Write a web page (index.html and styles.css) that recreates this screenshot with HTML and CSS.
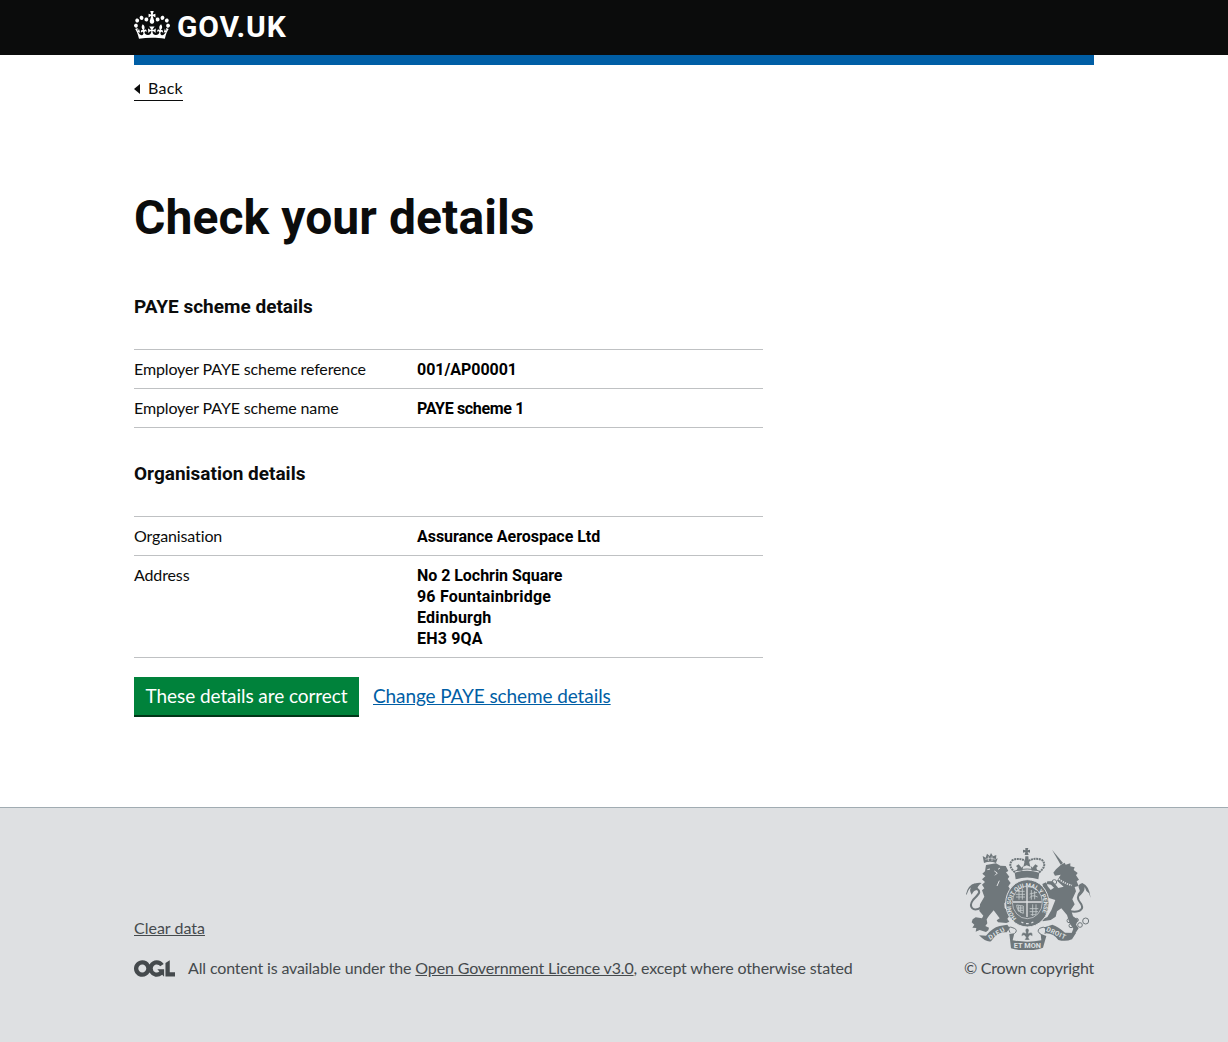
FILE: index.html
```html
<!DOCTYPE html>
<html lang="en">
<head>
<meta charset="utf-8">
<title>Check your details</title>
<link rel="stylesheet" href="styles.css">
</head>
<body>
<header class="header">
  <div class="container header-inner">
    <a class="logo" href="#">
      <svg class="logo-crown" viewBox="0 0 132 97" width="36" height="28" preserveAspectRatio="none" aria-hidden="true"><path fill="currentColor" fill-rule="evenodd" d="M25 30.2c3.5 1.5 7.7-.2 9.1-3.7 1.5-3.6-.2-7.8-3.9-9.2-3.6-1.4-7.6.3-9.1 3.9-1.4 3.5.3 7.5 3.9 9zM9 39.5c3.6 1.5 7.8-.2 9.2-3.7 1.5-3.6-.2-7.8-3.9-9.1-3.6-1.5-7.6.2-9.1 3.8-1.4 3.5.3 7.5 3.8 9zM4.4 57.2c3.5 1.5 7.7-.2 9.1-3.8 1.5-3.6-.2-7.7-3.9-9.1-3.5-1.5-7.6.3-9.1 3.8-1.4 3.5.3 7.6 3.9 9.1zm38.3-21.4c3.5 1.5 7.7-.2 9.1-3.8 1.5-3.6-.2-7.7-3.9-9.1-3.6-1.5-7.6.3-9.1 3.8-1.3 3.6.4 7.7 3.9 9.1zm64.4-5.6c-3.6 1.5-7.8-.2-9.1-3.7-1.5-3.6.2-7.8 3.8-9.2 3.6-1.4 7.7.3 9.2 3.9 1.3 3.5-.4 7.5-3.9 9zm15.9 9.3c-3.6 1.5-7.7-.2-9.1-3.7-1.5-3.6.2-7.8 3.7-9.1 3.6-1.5 7.7.2 9.2 3.8 1.5 3.5-.3 7.5-3.8 9zm4.7 17.7c-3.6 1.5-7.8-.2-9.2-3.8-1.5-3.6.2-7.7 3.9-9.1 3.6-1.5 7.7.3 9.2 3.8 1.3 3.5-.4 7.6-3.9 9.1zM89.3 35.8c-3.6 1.5-7.8-.2-9.2-3.8-1.4-3.6.2-7.7 3.9-9.1 3.6-1.5 7.7.3 9.2 3.8 1.4 3.6-.3 7.7-3.9 9.1zM69.7 17.7l8.9 4.7V9.3l-8.9 2.8c-.2-.3-.5-.6-.9-.9L72.4 0H59.6l3.5 11.2c-.3.3-.6.5-.9.9l-8.8-2.8v13.1l8.8-4.7c.3.3.6.7.9.9l-5 15.4v.1c-.2.8-.4 1.6-.4 2.4 0 4.1 3.1 7.5 7 8.1h.2c.3 0 .7.1 1 .1.4 0 .7 0 1-.1h.2c4-.6 7.1-4.1 7.1-8.1 0-.8-.1-1.7-.4-2.4V34l-5.1-15.4c.4-.2.7-.6 1-.9zM66 92.8c16.9 0 32.8 1.1 47.1 3.2 4-16.9 8.9-26.7 14-33.5l-9.6-3.4c1 4.9 1.1 7.2 0 10.2-1.5-1.4-3-4.3-4.2-8.7L108.6 76c2.8-2 5-3.2 7.5-3.3-4.4 9.4-10 11.9-13.6 11.2-4.3-.8-6.3-4.6-5.6-7.9 1-4.7 5.7-5.9 8-.5 4.3-8.7-3-11.4-7.6-8.8 7.1-7.2 7.9-13.5 2.1-21.1-8 6.1-8.1 12.3-4.5 20.8-4.7-5.4-12.1-2.5-9.5 6.2 3.4-5.2 7.9-2 7.2 3.1-.6 4.3-6.4 7.8-13.5 7.2-10.3-.9-10.9-8-11.2-13.8 2.5-.5 7.1 1.8 11 7.3L80.2 60c-4.1 4.4-8 5.3-12.3 5.4 1.4-4.4 8-11.6 8-11.6H55.5s6.4 7.2 7.9 11.6c-4.2-.1-8-1-12.3-5.4l1.4 16.4c3.9-5.5 8.5-7.7 10.9-7.3-.3 5.8-.9 12.8-11.1 13.8-7.2.6-12.9-2.9-13.5-7.2-.7-5 3.8-8.3 7.1-3.1 2.7-8.7-4.6-11.6-9.4-6.2 3.7-8.5 3.6-14.7-4.6-20.8-5.8 7.6-5 13.9 2.2 21.1-4.7-2.6-11.9.1-7.7 8.8 2.3-5.5 7.1-4.2 8.1.5.7 3.3-1.3 7.1-5.7 7.9-3.5.7-9-1.8-13.5-11.2 2.5.1 4.7 1.3 7.5 3.3l-4.7-15.4c-1.2 4.4-2.7 7.2-4.3 8.7-1.1-3-.9-5.3 0-10.2l-9.5 3.4c5 6.9 9.9 16.7 14 33.5 14.8-2.1 30.8-3.2 47.7-3.2z"/></svg>
      <span class="logo-text">GOV.UK</span>
    </a>
  </div>
</header>
<div class="container">
  <div class="header-bar"></div>
  <a class="back" href="#"><span class="back-arrow"></span>Back</a>
  <main class="main">
    <h1>Check your details</h1>
    <h2>PAYE scheme details</h2>
    <dl class="summary">
      <div class="row"><dt>Employer PAYE scheme reference</dt><dd>001/AP00001</dd></div>
      <div class="row"><dt>Employer PAYE scheme name</dt><dd class="tight">PAYE scheme 1</dd></div>
    </dl>
    <h2>Organisation details</h2>
    <dl class="summary">
      <div class="row"><dt>Organisation</dt><dd>Assurance Aerospace Ltd</dd></div>
      <div class="row"><dt>Address</dt><dd>No 2 Lochrin Square<br><span class="loose">96 Fountainbridge<br>Edinburgh<br>EH3 9QA</span></dd></div>
    </dl>
    <div class="actions">
      <button class="button" type="button">These details are correct</button>
      <a class="link" href="#">Change PAYE scheme details</a>
    </div>
  </main>
</div>
<footer class="footer">
  <div class="container footer-inner">
    <div class="meta">
      <a class="clear" href="#">Clear data</a>
      <div class="licence">
        <svg class="ogl" viewBox="0 0 483.2 195.7" width="41" height="17" aria-hidden="true"><path fill="currentColor" d="M421.5 142.8V.1l-50.7 32.3v161.1h112.4v-50.7zm-122.3-9.6A47.12 47.12 0 0 1 221 97.8c0-26 21.1-47.1 47.1-47.1 16.7 0 31.4 8.7 39.7 21.8l42.7-27.2A97.63 97.63 0 0 0 268.1 0c-36.5 0-68.3 20.1-85.1 49.7A98 98 0 0 0 97.8 0C43.9 0 0 43.9 0 97.8s43.9 97.8 97.8 97.8c36.5 0 68.3-20.1 85.1-49.7a97.76 97.76 0 0 0 149.6 25.4l19.4 22.2h3v-87.8h-80l24.3 27.5zM97.8 145c-26 0-47.1-21.1-47.1-47.1s21.1-47.1 47.1-47.1 47.1 21.1 47.1 47.1S123.8 145 97.8 145"/></svg>
        <span>All content is available under the <a href="#">Open Government Licence v3.0</a>, except where otherwise stated</span>
      </div>
    </div>
    <a class="copyright" href="#">
      <svg class="crest" viewBox="36 24 375 306" width="125" height="102" aria-hidden="true">
        <defs>
          <path id="motto" d="M188 235A49 53 0 1 1 252 235"/>
        </defs>
        <g fill="currentColor">
          <!-- lion -->
          <path d="M90 69L86 48L95 53L99 41L107 48L111 39L117 49L127 45L126 57L131 55L126 69Q108 62 90 69Z"/>
          <path d="M96 75L126 70L139 77L155 78L163 93L156 97L166 110L161 117L170 129L163 139L174 158L159 163L158 183L151 190L152 204L171 222L160 236L166 245L157 249L132 247L128 241L137 235L119 211L105 227L98 238L100 250L94 258L105 263L103 271L96 276L77 270L65 275L67 264L55 263L61 254L53 247L56 238L65 232L84 235L88 227L76 213L78 193L91 170L84 151L91 145L84 134L93 126L84 118L94 109L85 101L93 94Z"/>
          <path d="M53 164Q43 149 55 135Q66 127 83 129Q70 138 68 151Q60 150 53 164Z"/>
          <path d="M36 163Q42 135 63 130L61 136Q44 143 38 164Z"/>
          <!-- royal crown -->
          <path d="M214 24h9l-2 7 7-2v9l-7-2 3 9h-12l2-9-7 2v-9l7 2z"/>
          <path d="M182 98Q220 87 256 98L253 118Q220 107 185 118Z"/>
          <path d="M214 49h9l1 11 5 20-11-4-10 4 5-20zM194 73l9 10 5-6-3 15h-17l3-9-5-5zM244 73l-9 10-5-6 3 15h17l-3-9 5-5z"/>
          <!-- unicorn -->
          <path d="M294 29L327 69L320 74Z"/>
          <path d="M321 74L332 68L335 74L349 70L349 79L362 82L359 90L371 99L366 106L375 119L368 124L374 138L362 141L366 154L355 178L362 193L351 209L357 229L372 239L366 254L374 265L363 281L351 284L358 266L347 250L339 225L322 205L309 214L305 230L290 240L266 244L265 238L280 231L292 211L304 180L285 174L271 178L276 152L268 142L265 132L276 127L281 139L290 150L300 143L291 134L278 132L280 124L296 124L313 144L329 140L309 122L320 104L303 107L298 98L306 88Z"/>
          <path d="M371 172Q382 160 376 148Q368 133 385 129Q406 137 410 174L405 160Q395 153 392 141Q393 158 371 172Z"/>
          <!-- ribbons -->
          <path d="M75 286L96 287Q114 264 137 258L160 254L167 264L158 277Q130 274 111 304Q97 308 75 286Z"/>
          <path d="M272 262L295 254Q313 260 333 278L366 279L354 298Q335 306 313 300Q300 281 276 280Z"/>
          <path d="M166 282L181 280L176 301Q220 309 262 301L260 281L277 288L267 323Q221 339 171 325Z"/>
        </g>
        <g fill="none" stroke="currentColor">
          <path stroke-width="6" d="M82 202C56 219 43 199 57 180C72 163 84 157 68 145M347 214C385 220 391 202 378 187Q365 173 379 156"/>
          <path stroke-width="6" stroke-dasharray="6 2" d="M183 97Q159 76 176 60Q198 52 216 64M255 97Q281 77 264 60Q241 51 222 64"/>
          <path stroke-width="3" d="M184 92Q220 82 254 92M168 278Q155 253 181 265Q193 271 181 281M273 282Q282 253 257 265Q246 274 261 283"/>
          <g stroke-width="3"><circle cx="301" cy="126" r="7"/><circle cx="345" cy="242" r="6"/><circle cx="351" cy="257" r="6"/><circle cx="368" cy="240" r="5"/><circle cx="378" cy="255" r="7"/><circle cx="395" cy="243" r="9"/></g>
        </g>
        <!-- garter and shield -->
        <ellipse cx="220" cy="190" rx="65" ry="71" fill="currentColor" stroke="#dee0e2" stroke-width="3"/>
        <ellipse cx="220" cy="187" rx="45" ry="49" fill="currentColor" stroke="#dee0e2" stroke-width="2"/>
        <path d="M219 141V231M177 186H263" stroke="#dee0e2" stroke-width="4"/>
        <path d="M185 163h28M186 171h27M190 154h22M227 173q8-10 24-2M227 162l22-5M227 206h26M227 215h25M230 224h17M188 195l20 3v22q-20-5-20-25M194 197v18M200 198v20M190 204h17M191 211h17M232 150v29M242 153v25M236 193v35M246 193v30M195 148v31M205 145v34" fill="none" stroke="#c7ccce" stroke-width="2.5"/>
        <path d="M202 246l6 3M216 251h8M232 249l6-3" stroke="#dee0e2" stroke-width="4"/>
        <path fill="currentColor" stroke="#dee0e2" stroke-width="1" d="M214 270Q219 259 225 270L223 280Q238 272 235 289L228 285 223 292 227 300H212L216 292 210 285 203 289Q202 273 216 280Z"/>
        <g class="crest-text" fill="#dee0e2">
          <text font-size="18"><textPath href="#motto" textLength="228">HONI SOIT QUI MAL Y PENSE</textPath></text>
          <text font-size="22" x="179" y="325" textLength="82">ET MON</text>
          <text font-size="20" transform="translate(108 300) rotate(-30)" textLength="53">DIEU</text>
          <text font-size="20" transform="translate(275 272) rotate(25)" textLength="62">DROIT</text>
        </g>
        <g fill="none" stroke="#dee0e2">
          <path stroke-width="2" d="M94 58Q109 51 125 58M103 49v14M114 49v14"/>
          <path stroke-width="5" d="M310 112Q325 129 354 136" stroke-dasharray="4 3"/>
          <path stroke-width="3" d="M121 93l9 6-7 7M138 84l-6 4M108 87l-8 2M136 122l-7 16"/>
        </g>
      </svg>
      <span>© Crown copyright</span>
    </a>
  </div>
</footer>
</body>
</html>
```

FILE: styles.css
```css
* { box-sizing: border-box; }
body {
  margin: 0;
  min-height: 1042px;
  display: flex;
  flex-direction: column;
  background: #fff;
  color: #0b0c0c;
  font: 400 16px/21px Lato, sans-serif;
  letter-spacing: -0.13px;
}
h1, h2, dl, dd { margin: 0; }
a { color: inherit; }
.container { width: 960px; margin: 0 auto; }

.header { height: 55px; background: #0b0c0c; color: #fff; }
.header-inner { padding-top: 11px; }
.logo { display: flex; align-items: flex-start; gap: 7px; color: #fff; text-decoration: none; }
.logo-text { font: 700 30px/31px Roboto, sans-serif; letter-spacing: 0.8px; }
.header-bar { height: 10px; background: #005ea5; }

.back {
  display: inline-flex;
  align-items: center;
  gap: 8px;
  margin-top: 13px;
  padding-bottom: 2px;
  border-bottom: 1px solid #0b0c0c;
  line-height: 20px;
  letter-spacing: 0.27px;
  text-decoration: none;
}
.back-arrow { margin-top: 2px; border: 5px solid transparent; border-left: 0; border-right: 6px solid #0b0c0c; }

.main { width: 629px; padding-top: 92px; }
h1 { font: 700 48px/50px Roboto, sans-serif; letter-spacing: 0.08px; margin-bottom: 51px; }
h2 { font: 700 19px/25px Roboto, sans-serif; letter-spacing: 0; margin-bottom: 30px; }
.summary { border-top: 1px solid #bfc1c3; margin-bottom: 33px; }
.row { display: flex; padding: 9px 0 8px; border-bottom: 1px solid #bfc1c3; }
.row dt { width: 283px; margin-top: -1px; }
.row dd { font-family: Roboto, sans-serif; font-weight: 700; letter-spacing: -0.04px; color: #000; }
.row .tight { letter-spacing: -0.34px; }
.row .loose { letter-spacing: 0.18px; }

.actions { display: flex; gap: 15px; margin-top: -14px; font-size: 19px; line-height: 25px; }
.button {
  width: 225px;
  height: 38px;
  padding: 0 0 2px;
  border: 0;
  background: #00823b;
  box-shadow: 0 2px 0 #003618;
  color: #fff;
  font: inherit;
  letter-spacing: -0.07px;
}
.link { padding-top: 6px; margin-left: -1px; color: #005ea5; letter-spacing: -0.1px; }

.footer {
  flex: 1;
  margin-top: 92px;
  border-top: 1px solid #a1acb2;
  background: #dee0e2;
  color: #454a4d;
}
.footer-inner { display: flex; justify-content: space-between; padding-top: 40px; }
.meta { padding-top: 69px; }
.clear { display: block; width: max-content; margin-bottom: 19px; letter-spacing: 0; }
.licence { display: flex; align-items: center; gap: 13px; letter-spacing: -0.14px; }
.ogl { margin-top: 2px; }
.copyright { display: flex; flex-direction: column; gap: 7px; text-decoration: none; letter-spacing: -0.24px; }
.crest { margin-left: 2px; color: #6f777b; }
.crest-text { font-family: Roboto, sans-serif; font-weight: 700; letter-spacing: 0; }
```
